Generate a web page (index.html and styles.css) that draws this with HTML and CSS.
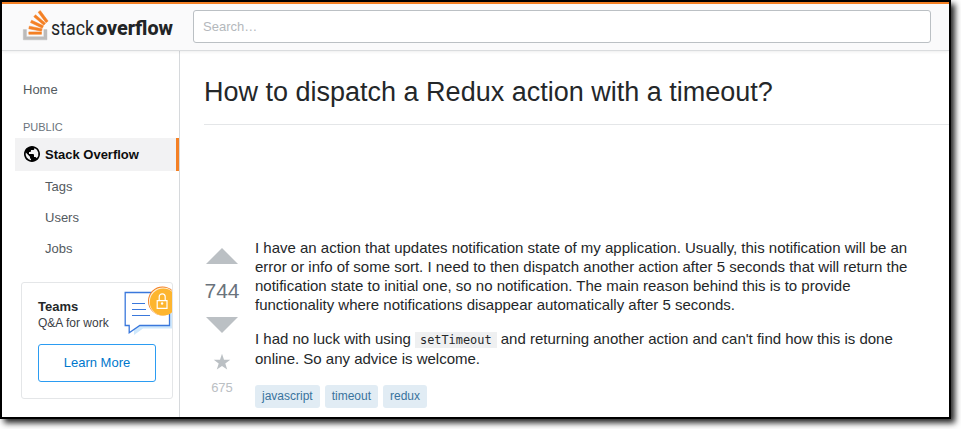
FILE: index.html
```html
<!DOCTYPE html>
<html lang="en">
<head>
<meta charset="utf-8">
<title>How to dispatch a Redux action with a timeout?</title>
<link rel="stylesheet" href="styles.css">
</head>
<body>
<div class="window">
  <header class="topbar">
    <svg class="logo" width="152" height="32" viewBox="0 0 152 32" aria-label="stackoverflow">
      <g transform="translate(.3 .6) scale(.79)">
        <path fill="#bcbbbb" stroke="#bcbbbb" stroke-width=".5" d="M26 33v-9h4v13H0V24h4v9h22z"/>
        <path fill="#f48024" stroke="#f48024" stroke-width=".7" d="m21.5 0-2.7 2 9.9 13.3 2.7-2L21.5 0zM26 18.4 13.3 7.8l2.1-2.5 12.7 10.6-2.1 2.5zM9.1 15.2l15 7 1.4-3-15-7-1.4 3zm14 10.79.68-2.95-16.1-3.35L7 23l16.1 2.99zM23 30H7v-3h16v3z"/>
      </g>
      <text class="logo-light" x="28" y="24.5" textLength="43" lengthAdjust="spacingAndGlyphs">stack</text>
      <text class="logo-bold" x="73" y="24.5" textLength="77" lengthAdjust="spacingAndGlyphs">overflow</text>
    </svg>
    <div class="search">Search…</div>
  </header>
  <div class="columns">
    <nav class="sidebar">
      <a class="nav-home">Home</a>
      <div class="nav-title">PUBLIC</div>
      <a class="nav-active">
        <svg width="18" height="18" viewBox="0 0 18 18"><path d="M9 1C4.64 1 1 4.64 1 9c0 4.36 3.64 8 8 8 4.36 0 8-3.64 8-8 0-4.36-3.64-8-8-8zM8 15.32a6.46 6.46 0 01-4.3-2.74 6.46 6.46 0 01-.93-5.01L7 11.68v.8c0 .88.12 1.32 1 1.32v1.52zm5.72-2c-.2-.66-1-1.32-1.72-1.32h-1v-2c0-.44-.56-1-1-1H6V7h1c.44 0 1-.56 1-1V5h2c.88 0 1.4-.72 1.4-1.6v-.33a6.45 6.45 0 013.83 4.51 6.45 6.45 0 01-1.51 5.73v.01z"/></svg>
        <span>Stack Overflow</span>
      </a>
      <a class="nav-item">Tags</a>
      <a class="nav-item">Users</a>
      <a class="nav-item">Jobs</a>
      <section class="teams">
        <div class="teams-head">
          <div class="teams-text"><strong>Teams</strong><span>Q&amp;A for work</span></div>
          <svg class="teams-art" width="48" height="50" viewBox="0 0 48 50">
            <path fill="#cfe8fc" d="M10 49v-6l8-6h28V20h2v22.500H19z"/>
            <path fill="#fff" stroke="#3a78dc" stroke-width="1.3" d="M1.200 6.500h44.300V39.500H15.800L5.200 46.700v-7.200H1.200z"/>
            <path fill="none" stroke="#3a78dc" stroke-width="1.2" d="M8 17.500h13M8 23.500h14M8 29.500h18"/>
            <circle cx="38.500" cy="15" r="14.500" fill="#f48024"/>
            <circle cx="38.900" cy="15.500" r="14" fill="#fff1d6"/>
            <circle cx="39.300" cy="16" r="13.500" fill="#fdb52f"/>
            <path fill="none" stroke="#fff" stroke-width="1.2" d="M33.200 14.700h9.800v7.700h-9.800zM35.200 14.500V10.800a3 3 0 0 1 6 0V14.500"/>
            <circle cx="38.100" cy="17.500" r="1.2" fill="#fff"/>
          </svg>
        </div>
        <a class="learn">Learn More</a>
      </section>
    </nav>
    <main class="content">
      <h1>How to dispatch a Redux action with a timeout?</h1>
      <div class="question">
        <div class="votes">
          <svg width="32" height="16" viewBox="0 0 32 16"><path d="M0 16 16 0l16 16z"/></svg>
          <span class="score">744</span>
          <svg width="32" height="16" viewBox="0 0 32 16"><path d="M0 0h32L16 16z"/></svg>
          <svg class="star" width="18" height="18" viewBox="0 0 18 18"><path d="M9 .8l2 5.900h6.300l-5 3.800 1.900 6L9 12.900l-5.200 3.600 1.900-6-5-3.800H7z"/></svg>
          <span class="favs">675</span>
        </div>
        <div class="post">
          <p>I have an action that updates notification state of my application. Usually, this notification will be an<br>error or info of some sort. I need to then dispatch another action after 5 seconds that will return the<br>notification state to initial one, so no notification. The main reason behind this is to provide<br>functionality where notifications disappear automatically after 5 seconds.</p>
          <p class="second">I had no luck with using <code>setTimeout</code> and returning another action and can't find how this is done<br>online. So any advice is welcome.</p>
          <div class="tags"><a>javascript</a><a>timeout</a><a>redux</a></div>
        </div>
      </div>
    </main>
  </div>
</div>
</body>
</html>
```
FILE: styles.css
```css
* { box-sizing: border-box; }
body {
  margin: 0;
  height: 429px;
  background: #fff;
  color: #242729;
  font-family: "Liberation Sans", Arial, sans-serif;
  font-size: 13px;
  overflow: hidden;
}
svg { display: block; flex: none; }
.window {
  display: flex;
  flex-direction: column;
  width: 951px;
  height: 419px;
  border: 2px solid #000;
  background: #fff;
  box-shadow: 4px 4px 6px 0 rgba(0, 0, 0, .85);
}
.topbar {
  display: flex;
  align-items: flex-start;
  height: 49px;
  flex: none;
  padding: 6px 18px 0 21px;
  border-top: 2px solid #f48024;
  border-bottom: 1px solid #dadcde;
  background: #fafafb;
  box-shadow: 0 1px 3px rgba(0, 0, 0, .07);
  z-index: 1;
}
.logo { overflow: visible; }
.logo-light, .logo-bold { font-family: Roboto, sans-serif; font-size: 20.5px; fill: #222426; }
.logo-light { font-weight: 400; }
.logo-bold { font-weight: 800; }
.search {
  width: 738px;
  height: 33px;
  margin-left: 18px;
  padding-left: 9px;
  border: 1px solid #bbc0c4;
  border-radius: 3px;
  background: #fff;
  color: #b4b8bc;
  line-height: 32px;
}
.columns { display: flex; flex: 1; min-height: 0; }
.sidebar {
  display: flex;
  flex-direction: column;
  width: 178px;
  padding: 31px 0 0 13px;
  border-right: 1px solid #d6d9dc;
  color: #535a60;
}
.nav-home { padding-left: 8px; line-height: 16px; }
.nav-title { margin-top: 23px; padding-left: 8px; font-size: 11px; line-height: 13px; color: #6a737c; }
.nav-active {
  display: flex;
  align-items: center;
  gap: 4px;
  height: 33px;
  margin-top: 4px;
  padding-left: 8px;
  border-right: 3px solid #f48024;
  background: #f2f2f3;
  color: #0c0d0e;
  font-weight: 700;
}
.nav-active svg { margin-top: -2px; }
.nav-item { height: 31px; padding-left: 30px; line-height: 31px; }
.teams {
  width: 152px;
  height: 117px;
  margin: 18px 0 0 6px;
  padding: 3px 0 0 16px;
  border: 1px solid #e4e6e8;
  border-radius: 3px;
  overflow: hidden;
}
.teams-head { display: flex; justify-content: space-between; }
.teams-text { display: flex; flex-direction: column; padding-top: 12px; line-height: 17px; font-size: 12px; color: #3b4045; white-space: nowrap; }
.teams-text strong { font-size: 13px; color: #242729; }
.learn {
  display: block;
  width: 118px;
  height: 38px;
  margin-top: 8px;
  border: 1px solid #2b9cf2;
  border-radius: 3px;
  color: #0077cc;
  text-align: center;
  line-height: 36px;
}
.content { flex: 1; min-width: 0; padding-left: 24px; }
h1 { height: 74px; margin: 0; padding-top: 24px; border-bottom: 1px solid #e4e6e8; font-size: 27px; font-weight: 400; line-height: 34px; white-space: nowrap; }
.question { display: flex; padding-top: 113px; }
.votes { display: flex; flex-direction: column; align-items: center; width: 36px; padding-top: 10px; fill: #bbc0c4; }
.score { margin: 11px 0; font-size: 21px; line-height: 31px; color: #6a737c; }
.star { margin-top: 20px; }
.favs { margin-top: 9px; font-size: 13px; line-height: 16px; color: #bbc0c4; }
.post { margin-left: 15px; font-size: 15px; line-height: 19px; letter-spacing: -.004px; white-space: nowrap; }
p { margin: 0; }
.second { margin-top: 15px; }
code { padding: 1px 5px; background: #eff0f1; font-family: "DejaVu Sans Mono", monospace; font-size: 11.9px; line-height: 17px; }
.tags { display: flex; gap: 5px; margin-top: 17px; }
.tags a { height: 23px; padding: 0 7px; border-radius: 3px; background: #e1ecf4; color: #39739d; font-size: 12px; line-height: 22px; }
```
